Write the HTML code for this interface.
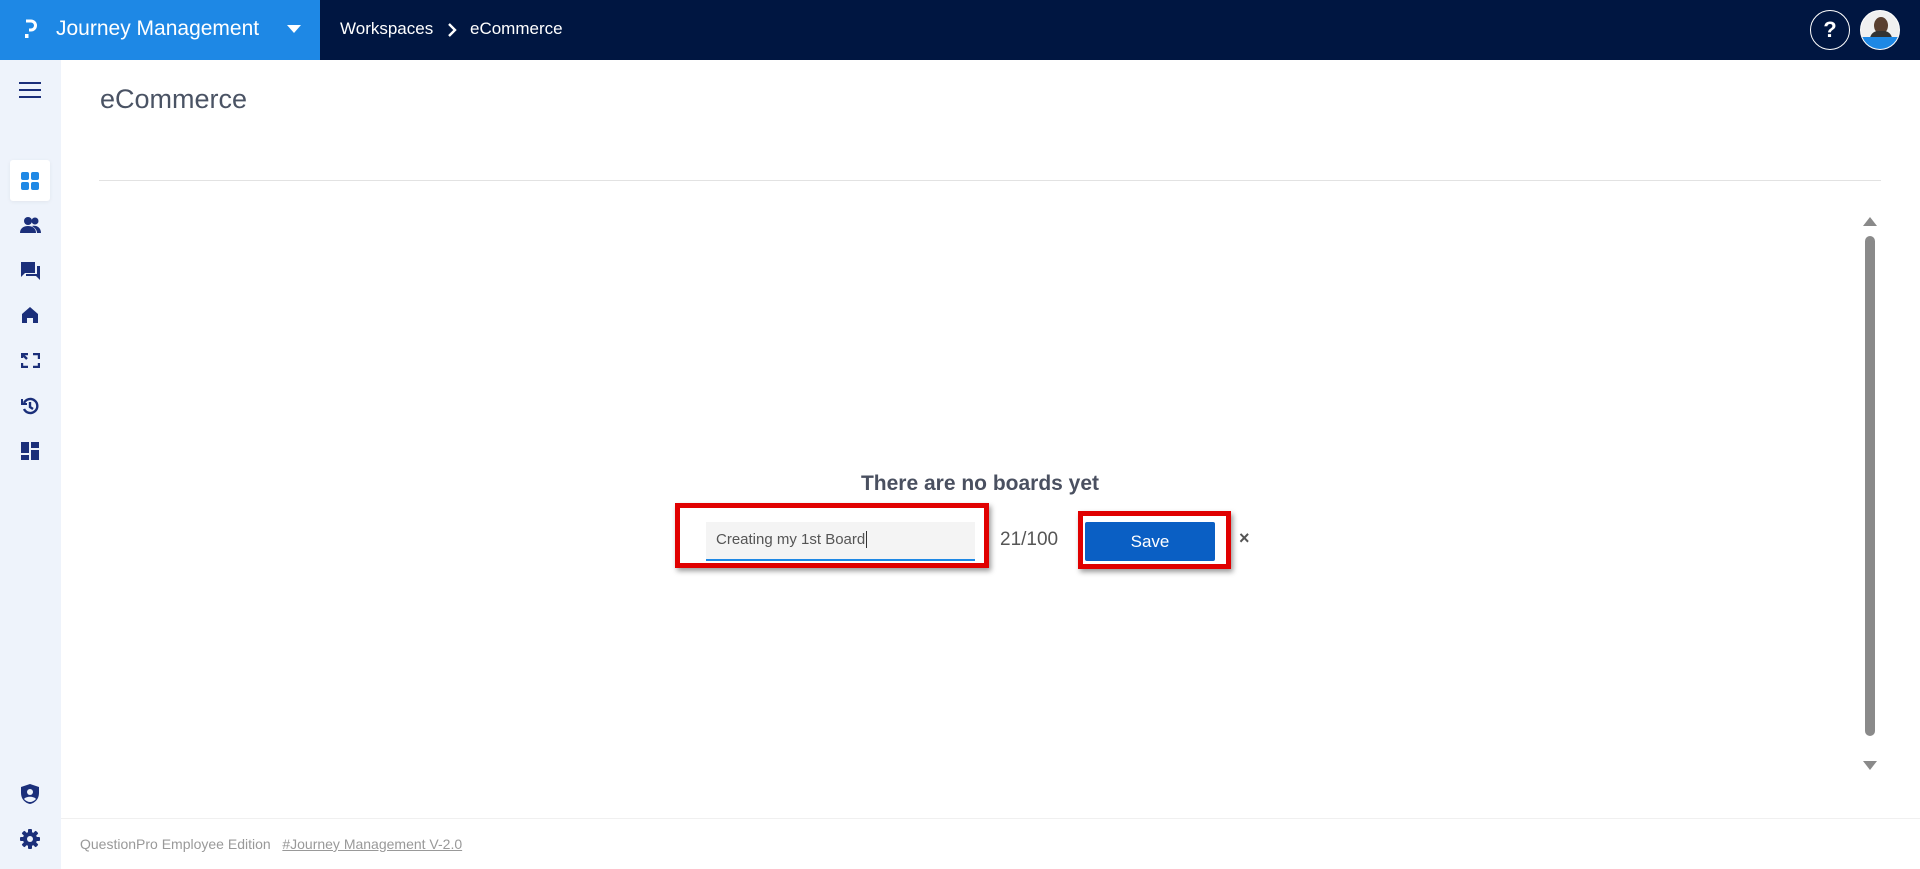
<!DOCTYPE html>
<html><head><meta charset="utf-8"><style>
*{margin:0;padding:0;box-sizing:border-box}
body{width:1920px;height:869px;overflow:hidden;background:#fff;font-family:"Liberation Sans",sans-serif;position:relative}
.abs{position:absolute}
</style></head><body>
<div class="abs" style="left:0;top:0;width:320px;height:60px;background:#1e88e5"></div>
<div class="abs" style="left:320px;top:0;width:1600px;height:60px;background:#001641"></div>
<svg class="abs" style="left:24px;top:19px" width="14" height="22"><path d="M2 2h5a4.5 4.5 0 0 1 0 9H5" stroke="#fff" stroke-width="3" fill="none"/><rect x="1" y="15" width="3.5" height="4" fill="#fff"/></svg>
<div class="abs" style="left:56px;top:17px;color:#fff;font-size:21px">Journey Management</div>
<svg class="abs" style="left:287px;top:24px" width="14" height="10"><path d="M0 1h14L7 9z" fill="#fff"/></svg>
<div class="abs" style="left:340px;top:19px;color:#fff;font-size:17px">Workspaces</div>
<svg class="abs" style="left:446px;top:22px" width="12" height="16"><path d="M3 2l6 6-6 6" stroke="#fff" stroke-width="2.4" fill="none"/></svg>
<div class="abs" style="left:470px;top:19px;color:#fff;font-size:17px">eCommerce</div>
<div class="abs" style="left:1810px;top:10px;width:40px;height:40px;border:1.5px solid #fff;border-radius:50%;color:#fff;font-weight:bold;font-size:22px;text-align:center;line-height:37px">?</div>
<div class="abs" style="left:1860px;top:10px;width:40px;height:40px;border:1.5px solid #fff;border-radius:50%;overflow:hidden;background:#f0f0f0">
<div class="abs" style="left:13px;top:6px;width:14px;height:17px;border-radius:50%;background:#5a4030"></div>
<div class="abs" style="left:9px;top:20px;width:22px;height:10px;border-radius:8px 8px 0 0;background:#333"></div>
<div class="abs" style="left:0;top:26px;width:40px;height:14px;background:#1e88e5"></div></div>

<div class="abs" style="left:0;top:60px;width:61px;height:809px;background:#eef3fb"></div>
<svg class="abs" style="left:18px;top:81px" width="24" height="18"><path d="M1 2h22M1 9h22M1 16h22" stroke="#1b2f7a" stroke-width="2"/></svg>
<div class="abs" style="left:10px;top:160px;width:40px;height:41px;background:#fff;border-radius:3px;box-shadow:0 1px 4px rgba(0,0,0,.06)"></div>
<svg class="abs" style="left:21px;top:172px" width="18" height="18" fill="#1e88e5"><rect x="0" y="0" width="8" height="8" rx="2"/><rect x="10" y="0" width="8" height="8" rx="2"/><rect x="0" y="10" width="8" height="8" rx="2"/><rect x="10" y="10" width="8" height="8" rx="2"/></svg>
<svg class="abs" style="left:20px;top:217px" width="22" height="16" fill="#1b2f7a"><circle cx="8" cy="4" r="4"/><circle cx="15" cy="4" r="3.5"/><path d="M0 16c0-5 4-7 8-7s8 2 8 7z"/><path d="M12 9c4-1 9 1 9 7h-4c0-3-2-5-5-7z"/></svg>
<svg class="abs" style="left:21px;top:262px" width="20" height="18" fill="#1b2f7a"><path d="M0 0h14v11H4l-4 4z"/><path d="M16 4h3v14l-4-4H5v-2h11z"/></svg>
<svg class="abs" style="left:22px;top:307px" width="16" height="16" fill="#1b2f7a"><path d="M8 0l8 7v9h-5v-5H5v5H0V7z"/></svg>
<svg class="abs" style="left:21px;top:353px" width="19" height="15" fill="none" stroke="#1b2f7a" stroke-width="2.4"><path d="M1 5V1h6M12 1h6v5M18 10v4h-6M7 14H1v-4"/><path d="M2 2l4 4" /></svg>
<svg class="abs" style="left:21px;top:397px" width="18" height="18" fill="none" stroke="#1b2f7a" stroke-width="2.4"><path d="M3 6a7 7 0 1 1 0 6"/><path d="M9 5v5l3 2"/><path d="M1 2v5h5" stroke-width="2"/></svg>
<svg class="abs" style="left:21px;top:442px" width="18" height="18" fill="#1b2f7a"><rect x="0" y="0" width="8" height="11"/><rect x="10" y="0" width="8" height="6"/><rect x="0" y="13" width="8" height="5"/><rect x="10" y="8" width="8" height="10"/></svg>
<svg class="abs" style="left:21px;top:784px" width="18" height="20" fill="#1b2f7a"><path d="M9 0l9 3v6c0 6-4 10-9 11C4 19 0 15 0 9V3z"/><circle cx="9" cy="8" r="3" fill="#eef3fb"/><path d="M3 15c2-3 10-3 12 0-2 2-4 3-6 3s-4-1-6-3z" fill="#eef3fb"/></svg>
<svg class="abs" style="left:20px;top:829px" width="20" height="20"><g fill="#1b2f7a"><circle cx="10" cy="10" r="7"/><rect x="8" y="0" width="4" height="20" rx="1"/><rect x="0" y="8" width="20" height="4" rx="1"/><rect x="8" y="0" width="4" height="20" rx="1" transform="rotate(45 10 10)"/><rect x="8" y="0" width="4" height="20" rx="1" transform="rotate(-45 10 10)"/></g><circle cx="10" cy="10" r="3" fill="#eef3fb"/></svg>

<div class="abs" style="left:100px;top:84px;font-size:27px;color:#4a5364">eCommerce</div>
<div class="abs" style="left:99px;top:180px;width:1782px;height:1px;background:#e2e2e2"></div>

<svg class="abs" style="left:1862px;top:215px" width="16" height="12"><path d="M1 11L8 2l7 9z" fill="#8a8a8a"/></svg>
<div class="abs" style="left:1865px;top:236px;width:10px;height:500px;background:#8a8a8a;border-radius:5px"></div>
<svg class="abs" style="left:1862px;top:760px" width="16" height="12"><path d="M1 1l7 9 7-9z" fill="#8a8a8a"/></svg>

<div class="abs" style="left:0;top:472px;width:1960px;text-align:center;font-size:21px;font-weight:bold;color:#4a5060">There are no boards yet</div>
<div class="abs" style="left:675px;top:503px;width:314px;height:65px;border:5px solid #e00000;box-shadow:2px 3px 5px rgba(0,0,0,.4)"></div>
<div class="abs" style="left:706px;top:522px;width:269px;height:39px;background:#f4f4f4;border-bottom:2px solid #1e88e5"></div>
<div class="abs" style="left:716px;top:531px;font-size:15px;color:#555">Creating my 1st Board<span style="border-left:1px solid #333;margin-left:1px"></span></div>
<div class="abs" style="left:1000px;top:529px;font-size:19px;color:#555">21/100</div>
<div class="abs" style="left:1078px;top:511px;width:153px;height:58px;border:5px solid #e00000;box-shadow:2px 3px 5px rgba(0,0,0,.4)"></div>
<div class="abs" style="left:1085px;top:522px;width:130px;height:39px;background:#0a5fc4;border-radius:2px;color:#fff;font-size:17px;text-align:center;line-height:39px">Save</div>
<div class="abs" style="left:1239px;top:528px;font-size:18px;color:#555;font-weight:bold">×</div>

<div class="abs" style="left:61px;top:818px;width:1859px;height:1px;background:#f0f0f0"></div>
<div class="abs" style="left:80px;top:836px;font-size:14px;color:#999">QuestionPro Employee Edition &nbsp;&nbsp;<span style="text-decoration:underline">#Journey Management V-2.0</span></div>
</body></html>
